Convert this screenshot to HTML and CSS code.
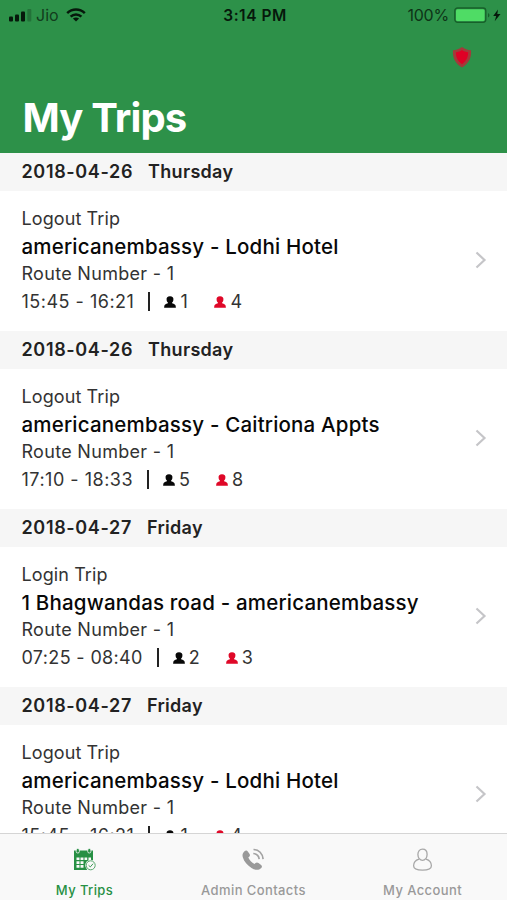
FILE: index.html
```html
<!DOCTYPE html>
<html lang="en">
<head>
<meta charset="utf-8">
<title>My Trips</title>
<link rel="stylesheet" href="styles.css">
</head>
<body>
<svg width="0" height="0" class="defs" aria-hidden="true">
  <symbol id="person" viewBox="0 0 12 12"><path d="M6 .3c2.500 0 3.700 1.500 3.400 3.500-.1 1.300-.6 2.100-1.300 2.800v.6c.8.5 3.200.9 3.500 2.300l.3 2.200H.1l.3-2.200c.3-1.400 2.700-1.800 3.500-2.300v-.6C3.200 5.900 2.700 5.100 2.600 3.800 2.300 1.800 3.500.3 6 .3z"/></symbol>
  <symbol id="chevron" viewBox="0 0 12 18"><path d="M1.500 1.500 9.500 9l-8 7.500" fill="none" stroke="#c5c5c8" stroke-width="2.200"/></symbol>
</svg>
<div class="screen">
  <header class="top">
    <div class="status">
      <div class="carrier">
        <svg class="signal" width="23" height="13" viewBox="0 0 23 13"><rect x="0" y="7.500" width="4" height="5" rx="1"/><rect x="6" y="5.500" width="4" height="7" rx="1"/><rect x="12" y="2.500" width="4" height="10" rx="1"/><rect x="18.300" y="0" width="4" height="12.500" rx="1" opacity=".25"/></svg>
        <span class="jio">Jio</span>
        <svg class="wifi" width="20" height="14" viewBox="0 0 20 14"><g fill="none" stroke="#06180b" stroke-width="2.500"><path d="M1.200 5.200c5-4.900 12.600-4.900 17.600 0"/><path d="M4.600 8.700c3.100-3 7.700-3 10.800 0"/></g><path d="M10 13.500 6.900 10.600c1.800-1.600 4.400-1.600 6.200 0z"/></svg>
      </div>
      <span class="clock">3:14 PM</span>
      <div class="power">
        <span class="percent">100%</span>
        <svg class="battery" width="47" height="17" viewBox="0 0 47 17"><rect x=".8" y="1" width="31" height="14.400" rx="2.800" fill="none" stroke="#17602a" stroke-width="1.300"/><rect x="2" y="2.300" width="28.600" height="11.800" rx="1.500" fill="#4fdc65"/><path d="M34 6c2 .8 2 3.600 0 4.400z" fill="#17602a"/><path d="M44 2.500 39.200 9h3l-1.500 5.200L46.500 7h-3.200z"/></svg>
      </div>
    </div>
    <svg class="shield" width="20" height="22" viewBox="0 0 20 22"><path d="M10 1c2.500 1.900 5.700 3 9 3.300C19.800 11.500 16.500 18 10 21.500 3.500 18 .2 11.500 1 4.300 4.300 4 7.500 2.900 10 1z" fill="#a4393a"/><path d="M10 3.900c1.800 1.300 3.900 2.100 6.100 2.400.2 5-2 9.200-6.100 11.900-4.100-2.700-6.300-6.900-6.100-11.900C6.100 6 8.200 5.200 10 3.900z" fill="#df0025"/></svg>
    <h1>My Trips</h1>
  </header>

  <main class="list">
    <section>
      <h2><span class="date">2018-04-26</span><span>Thursday</span></h2>
      <article class="trip">
        <div class="info">
          <p class="kind">Logout Trip</p>
          <p class="place">americanembassy - Lodhi Hotel</p>
          <p class="route">Route Number - 1</p>
          <p class="times"><span class="time">15:45 - 16:21</span><i class="bar"></i><svg class="who"><use href="#person"/></svg><span class="count one">1</span><svg class="who red"><use href="#person"/></svg><span class="count">4</span></p>
        </div>
        <svg class="chevron"><use href="#chevron"/></svg>
      </article>
    </section>
    <section>
      <h2><span class="date">2018-04-26</span><span>Thursday</span></h2>
      <article class="trip">
        <div class="info">
          <p class="kind">Logout Trip</p>
          <p class="place">americanembassy - Caitriona Appts</p>
          <p class="route">Route Number - 1</p>
          <p class="times"><span class="time">17:10 - 18:33</span><i class="bar"></i><svg class="who"><use href="#person"/></svg><span class="count">5</span><svg class="who red"><use href="#person"/></svg><span class="count">8</span></p>
        </div>
        <svg class="chevron"><use href="#chevron"/></svg>
      </article>
    </section>
    <section>
      <h2><span class="date">2018-04-27</span><span>Friday</span></h2>
      <article class="trip">
        <div class="info">
          <p class="kind">Login Trip</p>
          <p class="place">1 Bhagwandas road - americanembassy</p>
          <p class="route">Route Number - 1</p>
          <p class="times"><span class="time wide">07:25 - 08:40</span><i class="bar"></i><svg class="who"><use href="#person"/></svg><span class="count">2</span><svg class="who red"><use href="#person"/></svg><span class="count">3</span></p>
        </div>
        <svg class="chevron"><use href="#chevron"/></svg>
      </article>
    </section>
    <section>
      <h2><span class="date">2018-04-27</span><span>Friday</span></h2>
      <article class="trip">
        <div class="info">
          <p class="kind">Logout Trip</p>
          <p class="place">americanembassy - Lodhi Hotel</p>
          <p class="route">Route Number - 1</p>
          <p class="times"><span class="time">15:45 - 16:21</span><i class="bar"></i><svg class="who"><use href="#person"/></svg><span class="count one">1</span><svg class="who red"><use href="#person"/></svg><span class="count">4</span></p>
        </div>
        <svg class="chevron"><use href="#chevron"/></svg>
      </article>
    </section>
  </main>

  <nav class="tabs">
    <a class="tab active">
      <svg width="24" height="24" viewBox="0 0 24 24"><path d="M1 2.500h19V8H1z"/><path d="M1 8h19v14H1z"/><path d="M3.500 9.500h3v2.600h-3zm4 0h3v2.600h-3zm4 0h2.700v2.600h-2.700zm4 0H18v2.600h-2.500zM3.500 13.300h3v2.600h-3zm4 0h3v2.600h-3zM3.500 17.100h3v2.600h-3zm4 0h3v2.600h-3z" fill="#f9f9f9"/><g fill="#279044" stroke="#f9f9f9" stroke-width=".8"><rect x="3.200" y=".5" width="3.200" height="4.500" rx="1.500"/><rect x="14.700" y=".5" width="3.200" height="4.500" rx="1.500"/></g><circle cx="17.700" cy="17.300" r="5.500" fill="#f9f9f9"/><circle cx="17.700" cy="17.300" r="4.500" fill="#f9f9f9" stroke="#58a96d" stroke-width="1"/><path d="m15.600 17.300 1.700 1.600 2.800-3.200" fill="none" stroke="#3a9954" stroke-width="1"/></svg>
      <span>My Trips</span>
    </a>
    <a class="tab">
      <svg width="24" height="24" viewBox="0 0 24 24"><path d="M2.500 3.200c1.200-1.100 2.500-.9 3.300.2l1.600 2.300c.8 1.100.7 2.200-.2 3l-.9.8c1.300 2.800 3.300 4.900 6.200 6.500l1-.9c.9-.8 2-.8 3 0l2.600 1.900c1 .8 1.200 2 .2 3-2.700 2.700-6.500 2.100-9.800 0C5.500 17.500 2 13.600.8 9.300.1 6.800.7 4.800 2.500 3.200z"/><g fill="none" stroke="#a3a3a3" stroke-width="1.700"><path d="M11.500 1.500c5.300.1 9.200 4 9.600 9.600"/><path d="M11.300 5.500c3.300.2 5.500 2.300 5.900 5.600"/></g></svg>
      <span>Admin Contacts</span>
    </a>
    <a class="tab">
      <svg width="24" height="24" viewBox="0 0 24 24"><g fill="none" stroke="#a8a8a8" stroke-width="1.300"><path d="M11.500 1.200c2.800 0 4.600 2 4.600 5.300 0 3.200-2 5.900-4.600 5.900s-4.600-2.700-4.600-5.900c0-3.300 1.800-5.300 4.600-5.300z"/><path d="M8 11.100c-3.400 1-5.400 3.500-5.400 6.700 0 2.900 3.900 4.400 8.900 4.400s8.900-1.500 8.900-4.400c0-3.200-2-5.700-5.400-6.700"/></g></svg>
      <span>My Account</span>
    </a>
  </nav>
</div>
</body>
</html>
```

FILE: styles.css
```css
* { box-sizing: border-box; }
body { margin: 0; background: #fff; font-family: Inter, "Liberation Sans", sans-serif; color: #222; }
h1, h2, p { margin: 0; }
svg { display: block; flex: none; }
span { white-space: nowrap; }
.defs { position: absolute; }
.screen { height: 900px; width: 507px; display: flex; flex-direction: column; overflow: hidden; }

.top { height: 153px; flex: none; background: #2d9149; display: flex; flex-direction: column; }
.status { height: 30px; display: grid; grid-template-columns: 1fr auto 1fr; align-items: center; padding: 0 6px 0 9px; color: #06180b; fill: #06180b; }
.carrier, .power { display: flex; align-items: center; }
.power { justify-content: flex-end; }
.jio { font-size: 16px; margin-left: 4px; color: #123c1d; }
.wifi { margin-left: 7px; }
.clock { font-size: 15.500px; font-weight: 600; letter-spacing: .5px; }
.percent { font-size: 16px; letter-spacing: -.2px; color: #0d3317; }
.battery { margin-left: 5px; }
.shield { align-self: flex-end; margin: 16px 35px 0 0; }
h1 { color: #fff; font-size: 40px; line-height: 48px; font-weight: 700; letter-spacing: -.85px; margin: 26px 0 0 22.500px; }

.list { flex: 1; min-height: 0; overflow: hidden; }
h2 { height: 38px; background: #f6f6f6; padding-left: 21.500px; font-size: 18px; line-height: 38px; font-weight: 600; display: flex; gap: 15px; letter-spacing: .3px; }
.date { letter-spacing: .65px; }
.trip { height: 140px; padding: 15px 20px 0 21.500px; display: flex; justify-content: space-between; }
.info { flex: 1; }
.kind, .route { font-size: 18px; line-height: 26px; letter-spacing: .1px; color: #333; }
.place { font-size: 20.500px; line-height: 30px; font-weight: 500; letter-spacing: .19px; color: #080808; }
.route { line-height: 23px; letter-spacing: .3px; }
.times { display: flex; align-items: center; height: 32px; font-size: 18px; color: #333; }
.time { letter-spacing: .5px; }
.time.wide { letter-spacing: .35px; }
.bar { width: 2px; height: 19px; background: #222; margin: 1px 14px 0 14px; }
.who { width: 12px; height: 12px; fill: #080808; margin: 1px 4px 0 0; }
.who.red { fill: #df0828; }
.count { width: 37px; }
.count.one { width: 34px; }
.chevron { width: 12px; height: 18px; margin-top: 45px; }

.tabs { height: 67px; flex: none; border-top: 1px solid #d5d5d5; background: #f9f9f9; display: grid; grid-template-columns: repeat(3, 169px); }
.tab { display: flex; flex-direction: column; align-items: center; padding-top: 14px; color: #999; fill: #999; font-size: 13px; font-weight: 500; }
.tab span { margin-top: 9px; line-height: 18px; letter-spacing: .4px; }
.active { color: #279044; fill: #279044; }
```
